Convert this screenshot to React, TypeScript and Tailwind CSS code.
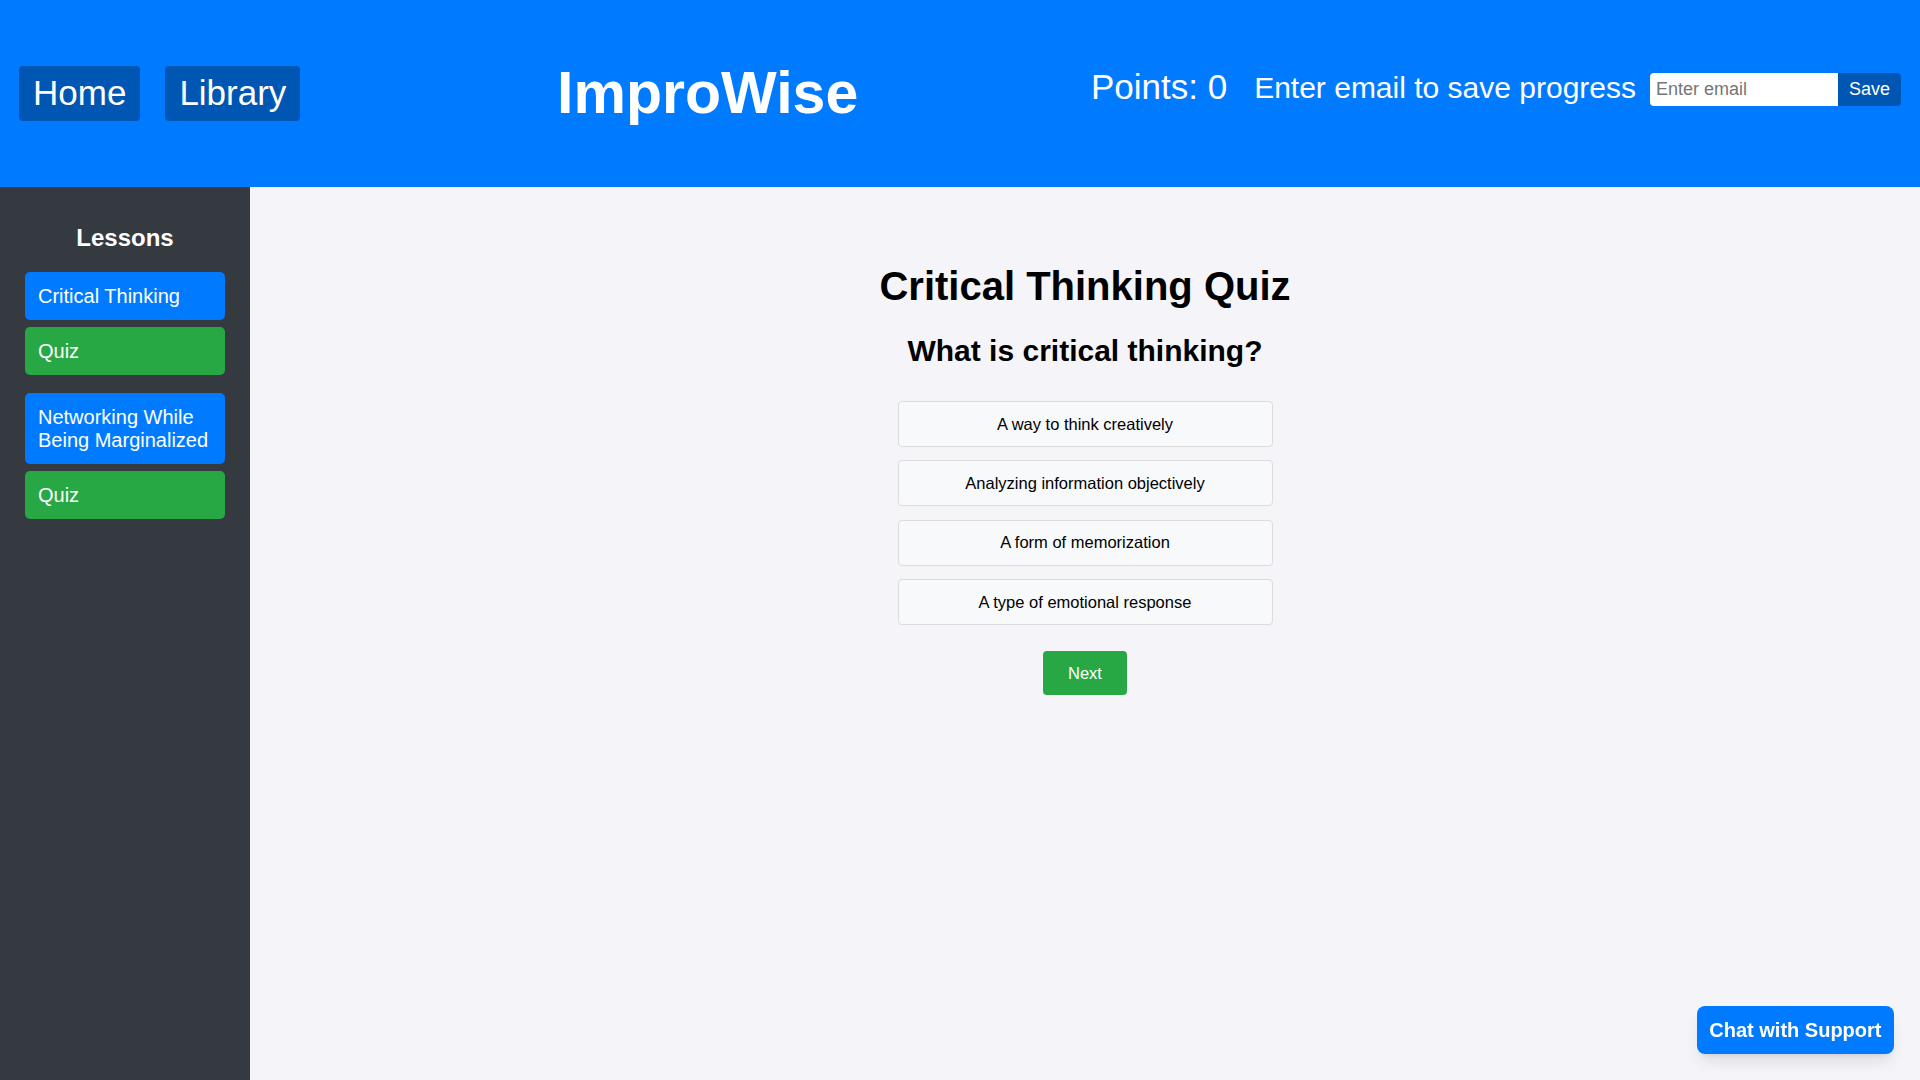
export default function App() {
  const options = [
    "A way to think creatively",
    "Analyzing information objectively",
    "A form of memorization",
    "A type of emotional response",
  ];

  return (
    <div className="flex h-screen flex-col font-['Liberation_Sans',Arial,sans-serif]">
      <header className="flex h-[187px] shrink-0 items-center justify-between bg-[#007bff] px-[19px] text-white">
        <nav className="flex gap-[25px]">
          <button className="h-[55px] rounded bg-[#0056b3] px-[14px] text-[35px]">Home</button>
          <button className="h-[55px] rounded bg-[#0056b3] px-[14px] text-[35px]">Library</button>
        </nav>
        <h1 className="ml-[24px] text-[59px] font-bold leading-none">ImproWise</h1>
        <div className="mb-[12px] flex items-center">
          <span className="text-[35px]">Points: 0</span>
          <span className="ml-[27px] text-[30px]">Enter email to save progress</span>
          <input
            type="email"
            placeholder="Enter email"
            className="ml-[14px] mt-[4px] h-[33px] w-[188px] rounded-l bg-white px-[6px] text-[18px] text-black outline-none placeholder:text-[#757575]"
          />
          <button className="mt-[4px] h-[33px] w-[63px] rounded-r bg-[#0056b3] text-[18px]">Save</button>
        </div>
      </header>

      <div className="flex flex-1">
        <aside className="w-[250px] shrink-0 bg-[#343a40] px-[25px] pt-[37px] text-white">
          <h2 className="text-center text-[24px] font-bold leading-[28px]">Lessons</h2>
          <div className="mt-[20px] flex flex-col gap-[7px]">
            <button className="rounded-[5px] bg-[#007bff] px-[13px] py-[12.5px] text-left text-[20px] leading-[23px]">
              Critical Thinking
            </button>
            <button className="rounded-[5px] bg-[#28a745] px-[13px] py-[12.5px] text-left text-[20px] leading-[23px]">
              Quiz
            </button>
          </div>
          <div className="mt-[18px] flex flex-col gap-[7px]">
            <button className="rounded-[5px] bg-[#007bff] px-[13px] py-[12.5px] text-left text-[20px] leading-[23px]">
              Networking While Being Marginalized
            </button>
            <button className="rounded-[5px] bg-[#28a745] px-[13px] py-[12.5px] text-left text-[20px] leading-[23px]">
              Quiz
            </button>
          </div>
        </aside>

        <main className="flex flex-1 flex-col items-center bg-[#f4f4f9] pt-[76px] text-black">
          <h1 className="text-[40px] font-bold leading-[46px]">Critical Thinking Quiz</h1>
          <h2 className="mt-[24.5px] text-[30px] font-bold leading-[34.5px]">What is critical thinking?</h2>
          <div className="mt-[33px] flex flex-col gap-[13.3px]">
            {options.map((o) => (
              <button
                key={o}
                className="h-[46px] w-[375px] rounded border border-[#dcdcdc] bg-[#f8f9fa] text-[16.5px]"
              >
                {o}
              </button>
            ))}
          </div>
          <button className="mt-[26px] h-[44px] rounded bg-[#28a745] px-[25px] text-[16.5px] text-white">Next</button>
        </main>
      </div>

      <button className="fixed bottom-[26px] right-[26px] h-[48px] rounded-[8px] bg-[#007bff] px-[12.5px] text-[20px] font-bold text-white shadow-lg">
        Chat with Support
      </button>
    </div>
  );
}
